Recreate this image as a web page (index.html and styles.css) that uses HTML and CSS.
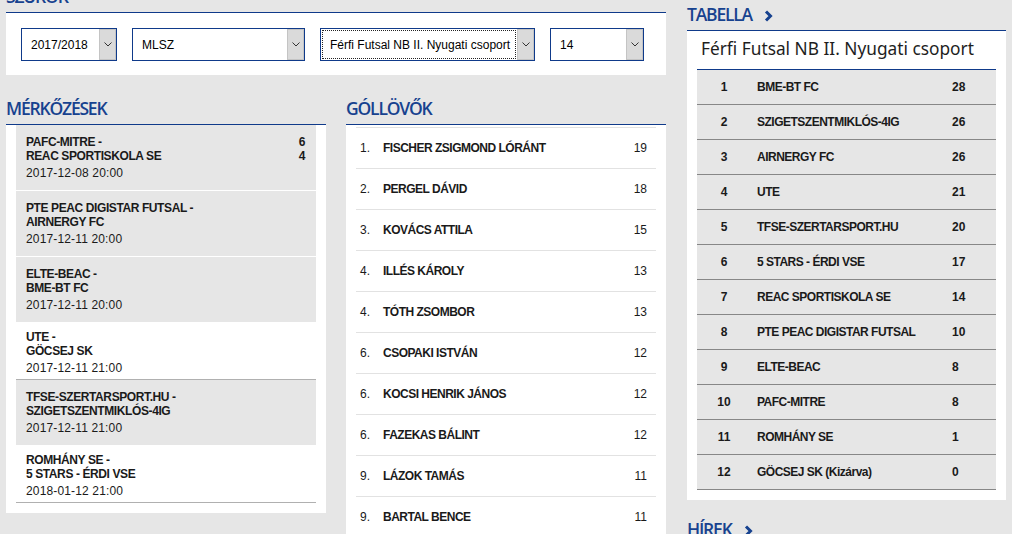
FILE: index.html
```html
<!DOCTYPE html>
<html lang="hu">
<head>
    <meta charset="UTF-8">
    <meta name="viewport" content="width=device-width, initial-scale=1.0">
    <title>Férfi Futsal NB II. Nyugati csoport</title>
    <link rel="stylesheet" href="styles.css">
</head>
<body>
    <div class="page">
        <div class="main">
            <section class="block filters">
                <h2 class="block-title">SZŰRŐK</h2>
                <div class="box filter-box">
                    <label class="picker picker-season">
                        <select><option>2017/2018</option></select>
                        <span class="picker-btn"><svg width="8" height="5" viewBox="0 0 8 5"><polyline points="0.5,0.5 4,4 7.5,0.5" fill="none" stroke="#333" stroke-width="1"/></svg></span>
                    </label>
                    <label class="picker picker-org">
                        <select><option>MLSZ</option></select>
                        <span class="picker-btn"><svg width="8" height="5" viewBox="0 0 8 5"><polyline points="0.5,0.5 4,4 7.5,0.5" fill="none" stroke="#333" stroke-width="1"/></svg></span>
                    </label>
                    <label class="picker picker-league">
                        <select class="focused"><option>Férfi Futsal NB II. Nyugati csoport</option></select>
                        <span class="picker-btn"><svg width="8" height="5" viewBox="0 0 8 5"><polyline points="0.5,0.5 4,4 7.5,0.5" fill="none" stroke="#333" stroke-width="1"/></svg></span>
                    </label>
                    <label class="picker picker-round">
                        <select><option>14</option></select>
                        <span class="picker-btn"><svg width="8" height="5" viewBox="0 0 8 5"><polyline points="0.5,0.5 4,4 7.5,0.5" fill="none" stroke="#333" stroke-width="1"/></svg></span>
                    </label>
                </div>
            </section>

            <div class="lists">
                <section class="block">
                    <h2 class="block-title">MÉRKŐZÉSEK</h2>
                    <div class="box match-box">
                        <div class="match shaded">
                            <div class="match-row"><span>PAFC-MITRE -</span><span class="score">6</span></div>
                            <div class="match-row"><span>REAC SPORTISKOLA SE</span><span class="score">4</span></div>
                            <div class="match-date">2017-12-08 20:00</div>
                        </div>
                        <div class="match shaded">
                            <div class="match-row"><span>PTE PEAC DIGISTAR FUTSAL -</span></div>
                            <div class="match-row"><span>AIRNERGY FC</span></div>
                            <div class="match-date">2017-12-11 20:00</div>
                        </div>
                        <div class="match shaded">
                            <div class="match-row"><span>ELTE-BEAC -</span></div>
                            <div class="match-row"><span>BME-BT FC</span></div>
                            <div class="match-date">2017-12-11 20:00</div>
                        </div>
                        <div class="match">
                            <div class="match-row"><span>UTE -</span></div>
                            <div class="match-row"><span>GÖCSEJ SK</span></div>
                            <div class="match-date">2017-12-11 21:00</div>
                        </div>
                        <div class="match shaded">
                            <div class="match-row"><span>TFSE-SZERTARSPORT.HU -</span></div>
                            <div class="match-row"><span>SZIGETSZENTMIKLÓS-4IG</span></div>
                            <div class="match-date">2017-12-11 21:00</div>
                        </div>
                        <div class="match">
                            <div class="match-row"><span>ROMHÁNY SE -</span></div>
                            <div class="match-row"><span>5 STARS - ÉRDI VSE</span></div>
                            <div class="match-date">2018-01-12 21:00</div>
                        </div>
                    </div>
                </section>

                <section class="block">
                    <h2 class="block-title">GÓLLÖVŐK</h2>
                    <div class="box scorer-box">
                        <ol class="scorers">
                            <li><span class="pos">1.</span><span class="name">FISCHER ZSIGMOND LÓRÁNT</span><span class="goals">19</span></li>
                            <li><span class="pos">2.</span><span class="name">PERGEL DÁVID</span><span class="goals">18</span></li>
                            <li><span class="pos">3.</span><span class="name">KOVÁCS ATTILA</span><span class="goals">15</span></li>
                            <li><span class="pos">4.</span><span class="name">ILLÉS KÁROLY</span><span class="goals">13</span></li>
                            <li><span class="pos">4.</span><span class="name">TÓTH ZSOMBOR</span><span class="goals">13</span></li>
                            <li><span class="pos">6.</span><span class="name">CSOPAKI ISTVÁN</span><span class="goals">12</span></li>
                            <li><span class="pos">6.</span><span class="name">KOCSI HENRIK JÁNOS</span><span class="goals">12</span></li>
                            <li><span class="pos">6.</span><span class="name">FAZEKAS BÁLINT</span><span class="goals">12</span></li>
                            <li><span class="pos">9.</span><span class="name">LÁZOK TAMÁS</span><span class="goals">11</span></li>
                            <li><span class="pos">9.</span><span class="name">BARTAL BENCE</span><span class="goals">11</span></li>
                        </ol>
                    </div>
                </section>
            </div>
        </div>

        <aside class="side">
            <section class="block">
                <h2 class="block-title">TABELLA <svg class="more" width="9" height="12" viewBox="0 0 9 12"><polyline points="2,1.5 6.5,6 2,10.5" fill="none" stroke="currentColor" stroke-width="3"/></svg></h2>
                <div class="box table-box">
                    <h3 class="league-name">Férfi Futsal NB II. Nyugati csoport</h3>
                    <table class="standings">
                        <colgroup><col class="c-pos"><col class="c-team"><col class="c-pts"></colgroup>
                        <tbody>
                            <tr><td>1</td><td>BME-BT FC</td><td>28</td></tr>
                            <tr><td>2</td><td>SZIGETSZENTMIKLÓS-4IG</td><td>26</td></tr>
                            <tr><td>3</td><td>AIRNERGY FC</td><td>26</td></tr>
                            <tr><td>4</td><td>UTE</td><td>21</td></tr>
                            <tr><td>5</td><td>TFSE-SZERTARSPORT.HU</td><td>20</td></tr>
                            <tr><td>6</td><td>5 STARS - ÉRDI VSE</td><td>17</td></tr>
                            <tr><td>7</td><td>REAC SPORTISKOLA SE</td><td>14</td></tr>
                            <tr><td>8</td><td>PTE PEAC DIGISTAR FUTSAL</td><td>10</td></tr>
                            <tr><td>9</td><td>ELTE-BEAC</td><td>8</td></tr>
                            <tr><td>10</td><td>PAFC-MITRE</td><td>8</td></tr>
                            <tr><td>11</td><td>ROMHÁNY SE</td><td>1</td></tr>
                            <tr><td>12</td><td>GÖCSEJ SK (Kizárva)</td><td>0</td></tr>
                        </tbody>
                    </table>
                </div>
            </section>
            <section class="block news">
                <h2 class="block-title">HÍREK <svg class="more" width="9" height="12" viewBox="0 0 9 12"><polyline points="2,1.5 6.5,6 2,10.5" fill="none" stroke="currentColor" stroke-width="3"/></svg></h2>
            </section>
        </aside>
    </div>
</body>
</html>
```

FILE: styles.css
```css
body {
    margin: 0;
    background-color: #e6e6e6;
    font-family: "Liberation Sans", Arial, sans-serif;
    font-size: 12px;
    color: #1a1a1a;
    overflow: hidden;
}
.page {
    display: flex;
    gap: 21px;
    padding: 2px 6px 0;
}
.main {
    width: 660px;
    margin-top: -18px;
}
.side {
    width: 320px;
}
.block-title {
    margin: 0;
    padding: 1px 0 5px;
    font-family: "Open Sans", "Noto Sans", sans-serif;
    font-weight: 600;
    font-size: 17.5px;
    line-height: 22px;
    letter-spacing: -1.2px;
    color: #17428f;
}
.more {
    margin-left: 9px;
    vertical-align: -1px;
}
.box {
    background: #fff;
    border-top: 1px solid #0f3a8a;
}

/* filters */
.filter-box {
    display: flex;
    gap: 15px;
    padding: 15px 15px 14px;
}
.picker {
    display: flex;
    height: 33px;
    box-sizing: border-box;
    border: 1px solid #0f3a8a;
    background: #fff;
}
.picker select {
    flex: 1;
    min-width: 0;
    appearance: none;
    border: none;
    background: transparent;
    padding: 0 0 0 9px;
    font-family: "Liberation Sans", Arial, sans-serif;
    font-size: 12px;
    color: #000;
}
.picker select.focused {
    outline: 1px dotted #222;
    outline-offset: -2px;
}
.picker-btn {
    width: 17px;
    box-sizing: border-box;
    display: flex;
    align-items: center;
    justify-content: center;
    background: #dadada;
    border: 1px solid #c4c4c4;
}
.picker-season { width: 96px; }
.picker-org { width: 173px; }
.picker-league { width: 215px; }
.picker-round { width: 94px; }

.lists {
    display: flex;
    gap: 20px;
    margin-top: 21px;
}
.lists .block {
    width: 320px;
}

/* matches */
.match-box {
    padding: 0 10px 10px;
}
.match {
    padding: 7px 11px 4px 10px;
    border-bottom: 1px solid #b0b0b0;
}
.match.shaded {
    background: #e6e6e6;
    padding: 10px 11px 10px 10px;
    border-bottom-color: #fff;
}
.match-row {
    display: flex;
    justify-content: space-between;
    font-weight: bold;
    line-height: 14px;
    letter-spacing: -0.4px;
}
.match-date {
    margin-top: 3px;
    line-height: 14px;
    letter-spacing: 0.15px;
}

/* scorers */
.scorer-box {
    padding: 2px 10px 0;
    height: 420px;
}
.scorers {
    list-style: none;
    margin: 0;
    padding: 0;
}
.scorers li {
    display: flex;
    border-top: 1px solid #e2e2e2;
    line-height: 40px;
    padding: 0 9px 0 4px;
}
.scorers .pos {
    width: 23px;
}
.scorers .name {
    flex: 1;
    font-weight: bold;
    letter-spacing: -0.5px;
}

/* standings */
.table-box {
    padding: 0 10px 10px;
}
.league-name {
    margin: 0 0 9px;
    padding: 7px 4px 0;
    font-family: "Noto Sans", sans-serif;
    font-weight: normal;
    font-size: 17.3px;
    line-height: 22px;
    color: #1e1e1e;
}
.standings {
    width: 100%;
    table-layout: fixed;
    border-collapse: collapse;
    border-top: 1px solid #0f3a8a;
}
.c-pos { width: 54px; }
.c-team { width: 201px; }
.standings td {
    height: 34px;
    padding: 0;
    background: #e6e6e6;
    border-bottom: 1px solid #878787;
    font-weight: bold;
}
.standings td:first-child {
    text-align: center;
}
.standings td:nth-child(2) {
    padding-left: 6px;
    letter-spacing: -0.5px;
}
.news {
    margin-top: 17px;
}
```
